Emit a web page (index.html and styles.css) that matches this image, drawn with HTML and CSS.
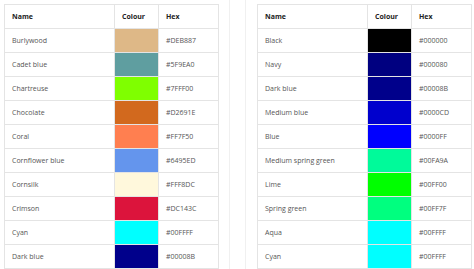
FILE: index.html
```html
<!DOCTYPE html>
<html>
<head>
<meta charset="utf-8">
<link rel="stylesheet" href="styles.css">
</head>
<body>
<div class="page">
  <div class="card">
    <table class="colours">
      <colgroup><col class="c-name"><col class="c-swatch"><col class="c-hex"></colgroup>
      <thead>
        <tr><th>Name</th><th>Colour</th><th>Hex</th></tr>
      </thead>
      <tbody>
        <tr><td>Burlywood</td><td class="sw" style="background:#DEB887"></td><td>#DEB887</td></tr>
        <tr><td>Cadet blue</td><td class="sw" style="background:#5F9EA0"></td><td>#5F9EA0</td></tr>
        <tr><td>Chartreuse</td><td class="sw" style="background:#7FFF00"></td><td>#7FFF00</td></tr>
        <tr><td>Chocolate</td><td class="sw" style="background:#D2691E"></td><td>#D2691E</td></tr>
        <tr><td>Coral</td><td class="sw" style="background:#FF7F50"></td><td>#FF7F50</td></tr>
        <tr><td>Cornflower blue</td><td class="sw" style="background:#6495ED"></td><td>#6495ED</td></tr>
        <tr><td>Cornsilk</td><td class="sw" style="background:#FFF8DC"></td><td>#FFF8DC</td></tr>
        <tr><td>Crimson</td><td class="sw" style="background:#DC143C"></td><td>#DC143C</td></tr>
        <tr><td>Cyan</td><td class="sw" style="background:#00FFFF"></td><td>#00FFFF</td></tr>
        <tr><td>Dark blue</td><td class="sw" style="background:#00008B"></td><td>#00008B</td></tr>
      </tbody>
    </table>
  </div>
  <div class="card">
    <table class="colours">
      <colgroup><col class="c-name"><col class="c-swatch"><col class="c-hex"></colgroup>
      <thead>
        <tr><th>Name</th><th>Colour</th><th>Hex</th></tr>
      </thead>
      <tbody>
        <tr><td>Black</td><td class="sw" style="background:#000000"></td><td>#000000</td></tr>
        <tr><td>Navy</td><td class="sw" style="background:#000080"></td><td>#000080</td></tr>
        <tr><td>Dark blue</td><td class="sw" style="background:#00008B"></td><td>#00008B</td></tr>
        <tr><td>Medium blue</td><td class="sw" style="background:#0000CD"></td><td>#0000CD</td></tr>
        <tr><td>Blue</td><td class="sw" style="background:#0000FF"></td><td>#0000FF</td></tr>
        <tr><td>Medium spring green</td><td class="sw" style="background:#00FA9A"></td><td>#00FA9A</td></tr>
        <tr><td>Lime</td><td class="sw" style="background:#00FF00"></td><td>#00FF00</td></tr>
        <tr><td>Spring green</td><td class="sw" style="background:#00FF7F"></td><td>#00FF7F</td></tr>
        <tr><td>Aqua</td><td class="sw" style="background:#00FFFF"></td><td>#00FFFF</td></tr>
        <tr><td>Cyan</td><td class="sw" style="background:#00FFFF"></td><td>#00FFFF</td></tr>
      </tbody>
    </table>
  </div>
</div>
</body>
</html>
```
FILE: styles.css
```css
html, body {
  margin: 0;
  padding: 0;
  background: #fff;
  overflow: hidden;
}
body {
  font-family: "Open Sans", "Noto Sans", sans-serif;
  font-size: 7px;
  color: #555;
}
.page {
  display: flex;
  gap: 15px;
  margin-left: -8px;
  width: 500px;
}
.card {
  flex: none;
  padding: 4px 10px 0 11px;
  border-left: 1px solid #f0f0f0;
  border-right: 1px solid #f0f0f0;
  height: 300px;
}
.colours {
  border-collapse: collapse;
  table-layout: fixed;
  width: 214px;
}
.colours th, .colours td {
  box-sizing: border-box;
  border: 1px solid #e4e4e4;
  padding: 0 7px;
  height: 24px;
  text-align: left;
  white-space: nowrap;
  overflow: hidden;
}
.colours th {
  font-weight: 700;
  color: #222;
}
.c-name { width: 110px; }
.c-swatch { width: 44px; }
.c-hex { width: 60px; }
.colours td.sw { padding: 0; }
```
